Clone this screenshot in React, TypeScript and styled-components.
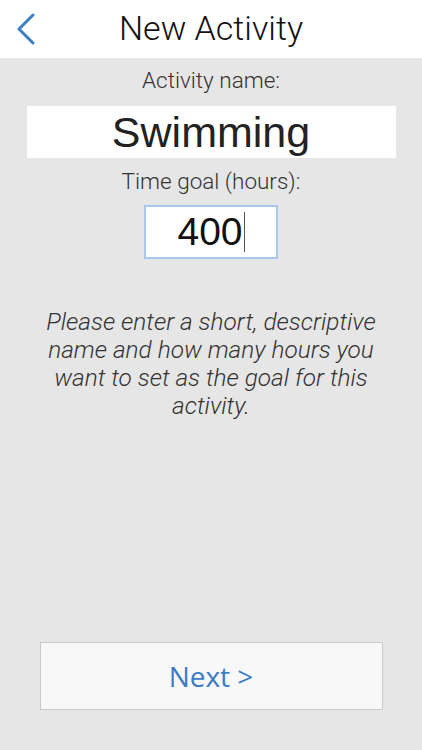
import styled, { createGlobalStyle } from "styled-components";

const GlobalStyle = createGlobalStyle`
  html, body {
    margin: 0;
    padding: 0;
    background: #e6e6e6;
  }
  #root {
    min-height: 100vh;
  }
`;

export default function App() {
  return (
    <>
      <GlobalStyle />
      <Screen>
        <Header>
          <BackButton aria-label="Back">
            <svg width="20" height="32" viewBox="0 0 20 32">
              <path
                d="M17 2 L3 16 L17 30"
                fill="none"
                stroke="#3b80c6"
                strokeWidth="3"
                strokeLinecap="round"
                strokeLinejoin="round"
              />
            </svg>
          </BackButton>
          <Title>New Activity</Title>
        </Header>
        <Body>
          <Label>Activity name:</Label>
          <NameField>Swimming</NameField>
          <Label $top={9}>Time goal (hours):</Label>
          <GoalField>
            400<Caret />
          </GoalField>
          <Hint>
            Please enter a short, descriptive name and how many hours you want
            to set as the goal for this activity.
          </Hint>
          <Spacer />
          <NextButton>Next &gt;</NextButton>
        </Body>
      </Screen>
    </>
  );
}

const Screen = styled.div`
  display: flex;
  flex-direction: column;
  width: 422px;
  height: 750px;
  background: #e6e6e6;
`;

const Header = styled.div`
  position: relative;
  display: flex;
  align-items: center;
  justify-content: center;
  height: 58px;
  background: #ffffff;
`;

const BackButton = styled.button`
  position: absolute;
  left: 16px;
  top: 13px;
  display: flex;
  padding: 0;
  background: none;
  border: none;
`;

const Title = styled.h1`
  margin: 0;
  font-family: Roboto, "Liberation Sans", sans-serif;
  font-weight: 300;
  font-size: 34px;
  color: #111;
  padding-bottom: 2px;
`;

const Body = styled.div`
  flex: 1;
  display: flex;
  flex-direction: column;
  align-items: center;
  padding: 8px 0 40px;
`;

const Label = styled.div<{ $top?: number }>`
  margin-top: ${(p) => p.$top ?? 0}px;
  font-family: Roboto, "Liberation Sans", sans-serif;
  font-weight: 300;
  font-size: 22.5px;
  line-height: 29px;
  color: #333;
`;

const NameField = styled.div`
  margin-top: 11px;
  width: 369px;
  height: 52px;
  display: flex;
  align-items: center;
  justify-content: center;
  background: #ffffff;
  font-family: "Liberation Sans", Arial, sans-serif;
  font-size: 43px;
  color: #222;
`;

const GoalField = styled.div`
  margin-top: 9px;
  width: 130px;
  height: 50px;
  display: flex;
  align-items: center;
  justify-content: center;
  background: #ffffff;
  border: 2px solid #a9c7ea;
  font-family: "Liberation Sans", Arial, sans-serif;
  font-size: 39px;
  color: #111;
`;

const Caret = styled.span`
  display: inline-block;
  width: 1px;
  height: 40px;
  margin-left: 1px;
  background: #555;
`;

const Hint = styled.p`
  margin: 49px 0 0;
  width: 350px;
  text-align: center;
  font-family: Roboto, "Liberation Sans", sans-serif;
  font-style: italic;
  font-weight: 300;
  font-size: 24.4px;
  line-height: 28px;
  color: #333;
`;

const Spacer = styled.div`
  flex: 1;
`;

const NextButton = styled.button`
  width: 343px;
  height: 68px;
  background: #f8f8f9;
  border: 1px solid #c9c9c9;
  font-family: "Open Sans", Roboto, sans-serif;
  font-size: 28px;
  color: #3b7cc4;
  cursor: pointer;
`;
